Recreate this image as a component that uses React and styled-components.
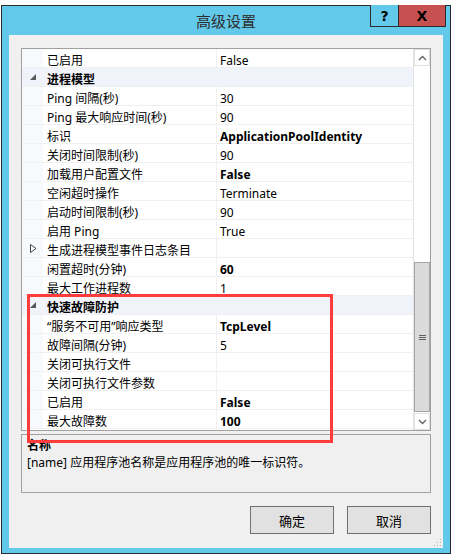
import styled, { createGlobalStyle } from "styled-components";

const GlobalStyle = createGlobalStyle`
  body {
    margin: 0;
    background: #ffffff;
    font-family: "Noto Sans", "Noto Sans CJK SC", sans-serif;
  }
`;

const FONT = `"Noto Sans", "Noto Sans CJK SC", sans-serif`;

const Window = styled.div`
  box-sizing: border-box;
  width: 450px;
  height: 549px;
  margin: 5px 0 0 1px;
  border: 1px solid #2b2b2b;
  background: #63c9ea;
  display: flex;
  flex-direction: column;
  position: relative;
`;

const TitleBar = styled.div`
  height: 29px;
  display: grid;
  grid-template-columns: 1fr auto 1fr;
  align-items: start;
`;

const Title = styled.div`
  grid-column: 2;
  font-size: 15px;
  line-height: 29px;
  padding-top: 1px;
  color: #2d2d2d;
  font-family: ${FONT};
`;

const CaptionButtons = styled.div`
  grid-column: 3;
  justify-self: end;
  display: flex;
  margin: -1px 4px 0 0;
  border: 1px solid #2b2b2b;
  border-top: none;
`;

const CaptionButton = styled.div`
  height: 21px;
  width: ${({ $w }) => $w}px;
  background: ${({ $close }) => ($close ? "#c75050" : "#63c9ea")};
  border-left: ${({ $close }) => ($close ? "1px solid #2b2b2b" : "none")};
  display: flex;
  align-items: center;
  justify-content: center;
  font: bold 14px "DejaVu Sans", sans-serif;
  color: #000;
`;

const Client = styled.div`
  position: relative;
  flex: 1;
  margin: 0 7px 5px 7px;
  background: #f0f0f0;
  padding: 13px 12px 0 12px;
  display: flex;
  flex-direction: column;
`;

const Grid = styled.div`
  box-sizing: border-box;
  height: 383px;
  border: 1px solid #a0a0a0;
  background: #fff;
  display: flex;
`;

const Rows = styled.div`
  flex: 1;
  display: flex;
  flex-direction: column;
`;

const Row = styled.div`
  box-sizing: border-box;
  height: 19px;
  display: grid;
  grid-template-columns: 21px 174px 1fr;
  border-bottom: 1px solid #f0f0f0;
  background: ${({ $cat }) => ($cat ? "#f0f3f9" : "#fff")};
  font-family: ${FONT};
  font-size: 12px;
  line-height: 13px;
  color: #000;
`;

const Gutter = styled.div`
  background: ${({ $cat }) => ($cat ? "#f0f3f9" : "#f7f9fc")};
  display: flex;
  align-items: center;
  justify-content: center;
  padding-left: 2px;
`;

const NameCell = styled.div`
  padding: 5px 0 0 4px;
  white-space: nowrap;
  font-weight: ${({ $cat }) => ($cat ? "bold" : "normal")};
  border-right: ${({ $cat }) => ($cat ? "none" : "1px solid #f0f0f0")};
`;

const ValueCell = styled.div`
  padding: 5px 0 0 3px;
  white-space: nowrap;
  font-weight: ${({ $bold }) => ($bold ? "bold" : "normal")};
`;

const ScrollBar = styled.div`
  width: 17px;
  border-left: 1px solid #e3e3e3;
  box-sizing: border-box;
  display: flex;
  flex-direction: column;
  background: #fff;
`;

const ArrowBox = styled.div`
  height: 17px;
  box-sizing: border-box;
  border: 1px solid #e0e0e0;
  background: #fff;
  display: flex;
  align-items: center;
  justify-content: center;
`;

const Track = styled.div`
  height: ${({ $h }) => $h}px;
`;

const Thumb = styled.div`
  flex: 1;
  box-sizing: border-box;
  border: 1px solid #a6a6a6;
  background: #dadada;
  display: flex;
  align-items: center;
  justify-content: center;
  margin-bottom: 1px;
`;

const Grip = styled.div`
  width: 7px;
  display: flex;
  flex-direction: column;
  gap: 1px;
  & span {
    height: 1px;
    background: #606060;
  }
`;

const Desc = styled.div`
  box-sizing: border-box;
  height: 59px;
  margin-top: 3px;
  border: 1px solid #a0a0a0;
  padding: 3px 5px 0;
  font-family: ${FONT};
  font-size: 12px;
  line-height: 19px;
  color: #000;
`;

const DescTitle = styled.div`
  font-weight: bold;
  line-height: 15px;
`;

const Buttons = styled.div`
  display: flex;
  justify-content: flex-end;
  gap: 13px;
  margin-top: 13px;
`;

const Button = styled.div`
  box-sizing: border-box;
  width: 84px;
  height: 28px;
  border: 1px solid #707070;
  background: #e1e1e1;
  display: flex;
  align-items: center;
  justify-content: center;
  font-family: ${FONT};
  font-size: 13px;
  color: #000;
`;

const Highlight = styled.div`
  position: absolute;
  left: 18px;
  top: 259px;
  width: 306px;
  height: 149px;
  box-sizing: border-box;
  border: 3px solid #ff3b3b;
  pointer-events: none;
`;

const Grabber = styled.svg`
  position: absolute;
  right: 1px;
  bottom: 1px;
`;

const rows = [
  { name: "已启用", value: "False" },
  { cat: true, name: "进程模型" },
  { name: "Ping 间隔(秒)", value: "30" },
  { name: "Ping 最大响应时间(秒)", value: "90" },
  { name: "标识", value: "ApplicationPoolIdentity", bold: true },
  { name: "关闭时间限制(秒)", value: "90" },
  { name: "加载用户配置文件", value: "False", bold: true },
  { name: "空闲超时操作", value: "Terminate" },
  { name: "启动时间限制(秒)", value: "90" },
  { name: "启用 Ping", value: "True" },
  { name: "生成进程模型事件日志条目", value: "", collapsed: true },
  { name: "闲置超时(分钟)", value: "60", bold: true },
  { name: "最大工作进程数", value: "1" },
  { cat: true, name: "快速故障防护" },
  { name: "“服务不可用”响应类型", value: "TcpLevel", bold: true },
  { name: "故障间隔(分钟)", value: "5" },
  { name: "关闭可执行文件", value: "" },
  { name: "关闭可执行文件参数", value: "" },
  { name: "已启用", value: "False", bold: true },
  { name: "最大故障数", value: "100", bold: true },
];

function Expanded() {
  return (
    <svg width="7" height="7" viewBox="0 0 7 7">
      <polygon points="6,0 6,6 0,6" fill="#595959" />
    </svg>
  );
}

function Collapsed() {
  return (
    <svg width="7" height="9" viewBox="0 0 7 9">
      <polygon points="0.5,0.5 6,4.5 0.5,8.5" fill="#fff" stroke="#404040" strokeWidth="1" />
    </svg>
  );
}

export default function App() {
  return (
    <>
      <GlobalStyle />
      <Window>
        <TitleBar>
          <Title>高级设置</Title>
          <CaptionButtons>
            <CaptionButton $w={27}>?</CaptionButton>
            <CaptionButton $w={46} $close>
              X
            </CaptionButton>
          </CaptionButtons>
        </TitleBar>
        <Client>
          <Grid>
            <Rows>
              {rows.map((r, i) => (
                <Row key={i} $cat={r.cat}>
                  <Gutter $cat={r.cat}>
                    {r.cat && <Expanded />}
                    {r.collapsed && <Collapsed />}
                  </Gutter>
                  <NameCell $cat={r.cat}>{r.name}</NameCell>
                  {!r.cat && <ValueCell $bold={r.bold}>{r.value}</ValueCell>}
                </Row>
              ))}
            </Rows>
            <ScrollBar>
              <ArrowBox>
                <svg width="9" height="6" viewBox="0 0 9 6">
                  <polyline points="1,5 4.5,1.5 8,5" fill="none" stroke="#606060" strokeWidth="1.3" />
                </svg>
              </ArrowBox>
              <Track $h={196} />
              <Thumb>
                <Grip>
                  <span />
                  <span />
                  <span />
                </Grip>
              </Thumb>
              <ArrowBox>
                <svg width="9" height="6" viewBox="0 0 9 6">
                  <polyline points="1,1 4.5,4.5 8,1" fill="none" stroke="#606060" strokeWidth="1.3" />
                </svg>
              </ArrowBox>
            </ScrollBar>
          </Grid>
          <Desc>
            <DescTitle>名称</DescTitle>
            <div>[name] 应用程序池名称是应用程序池的唯一标识符。</div>
          </Desc>
          <Buttons>
            <Button>确定</Button>
            <Button>取消</Button>
          </Buttons>
          <Highlight />
          <Grabber width="8" height="8" viewBox="0 0 8 8">
            <rect x="6" y="0" width="1" height="1" fill="#b0b0b0" />
            <rect x="3" y="3" width="1" height="1" fill="#b0b0b0" />
            <rect x="6" y="3" width="1" height="1" fill="#b0b0b0" />
            <rect x="0" y="6" width="1" height="1" fill="#b0b0b0" />
            <rect x="3" y="6" width="1" height="1" fill="#b0b0b0" />
            <rect x="6" y="6" width="1" height="1" fill="#b0b0b0" />
          </Grabber>
        </Client>
      </Window>
    </>
  );
}
